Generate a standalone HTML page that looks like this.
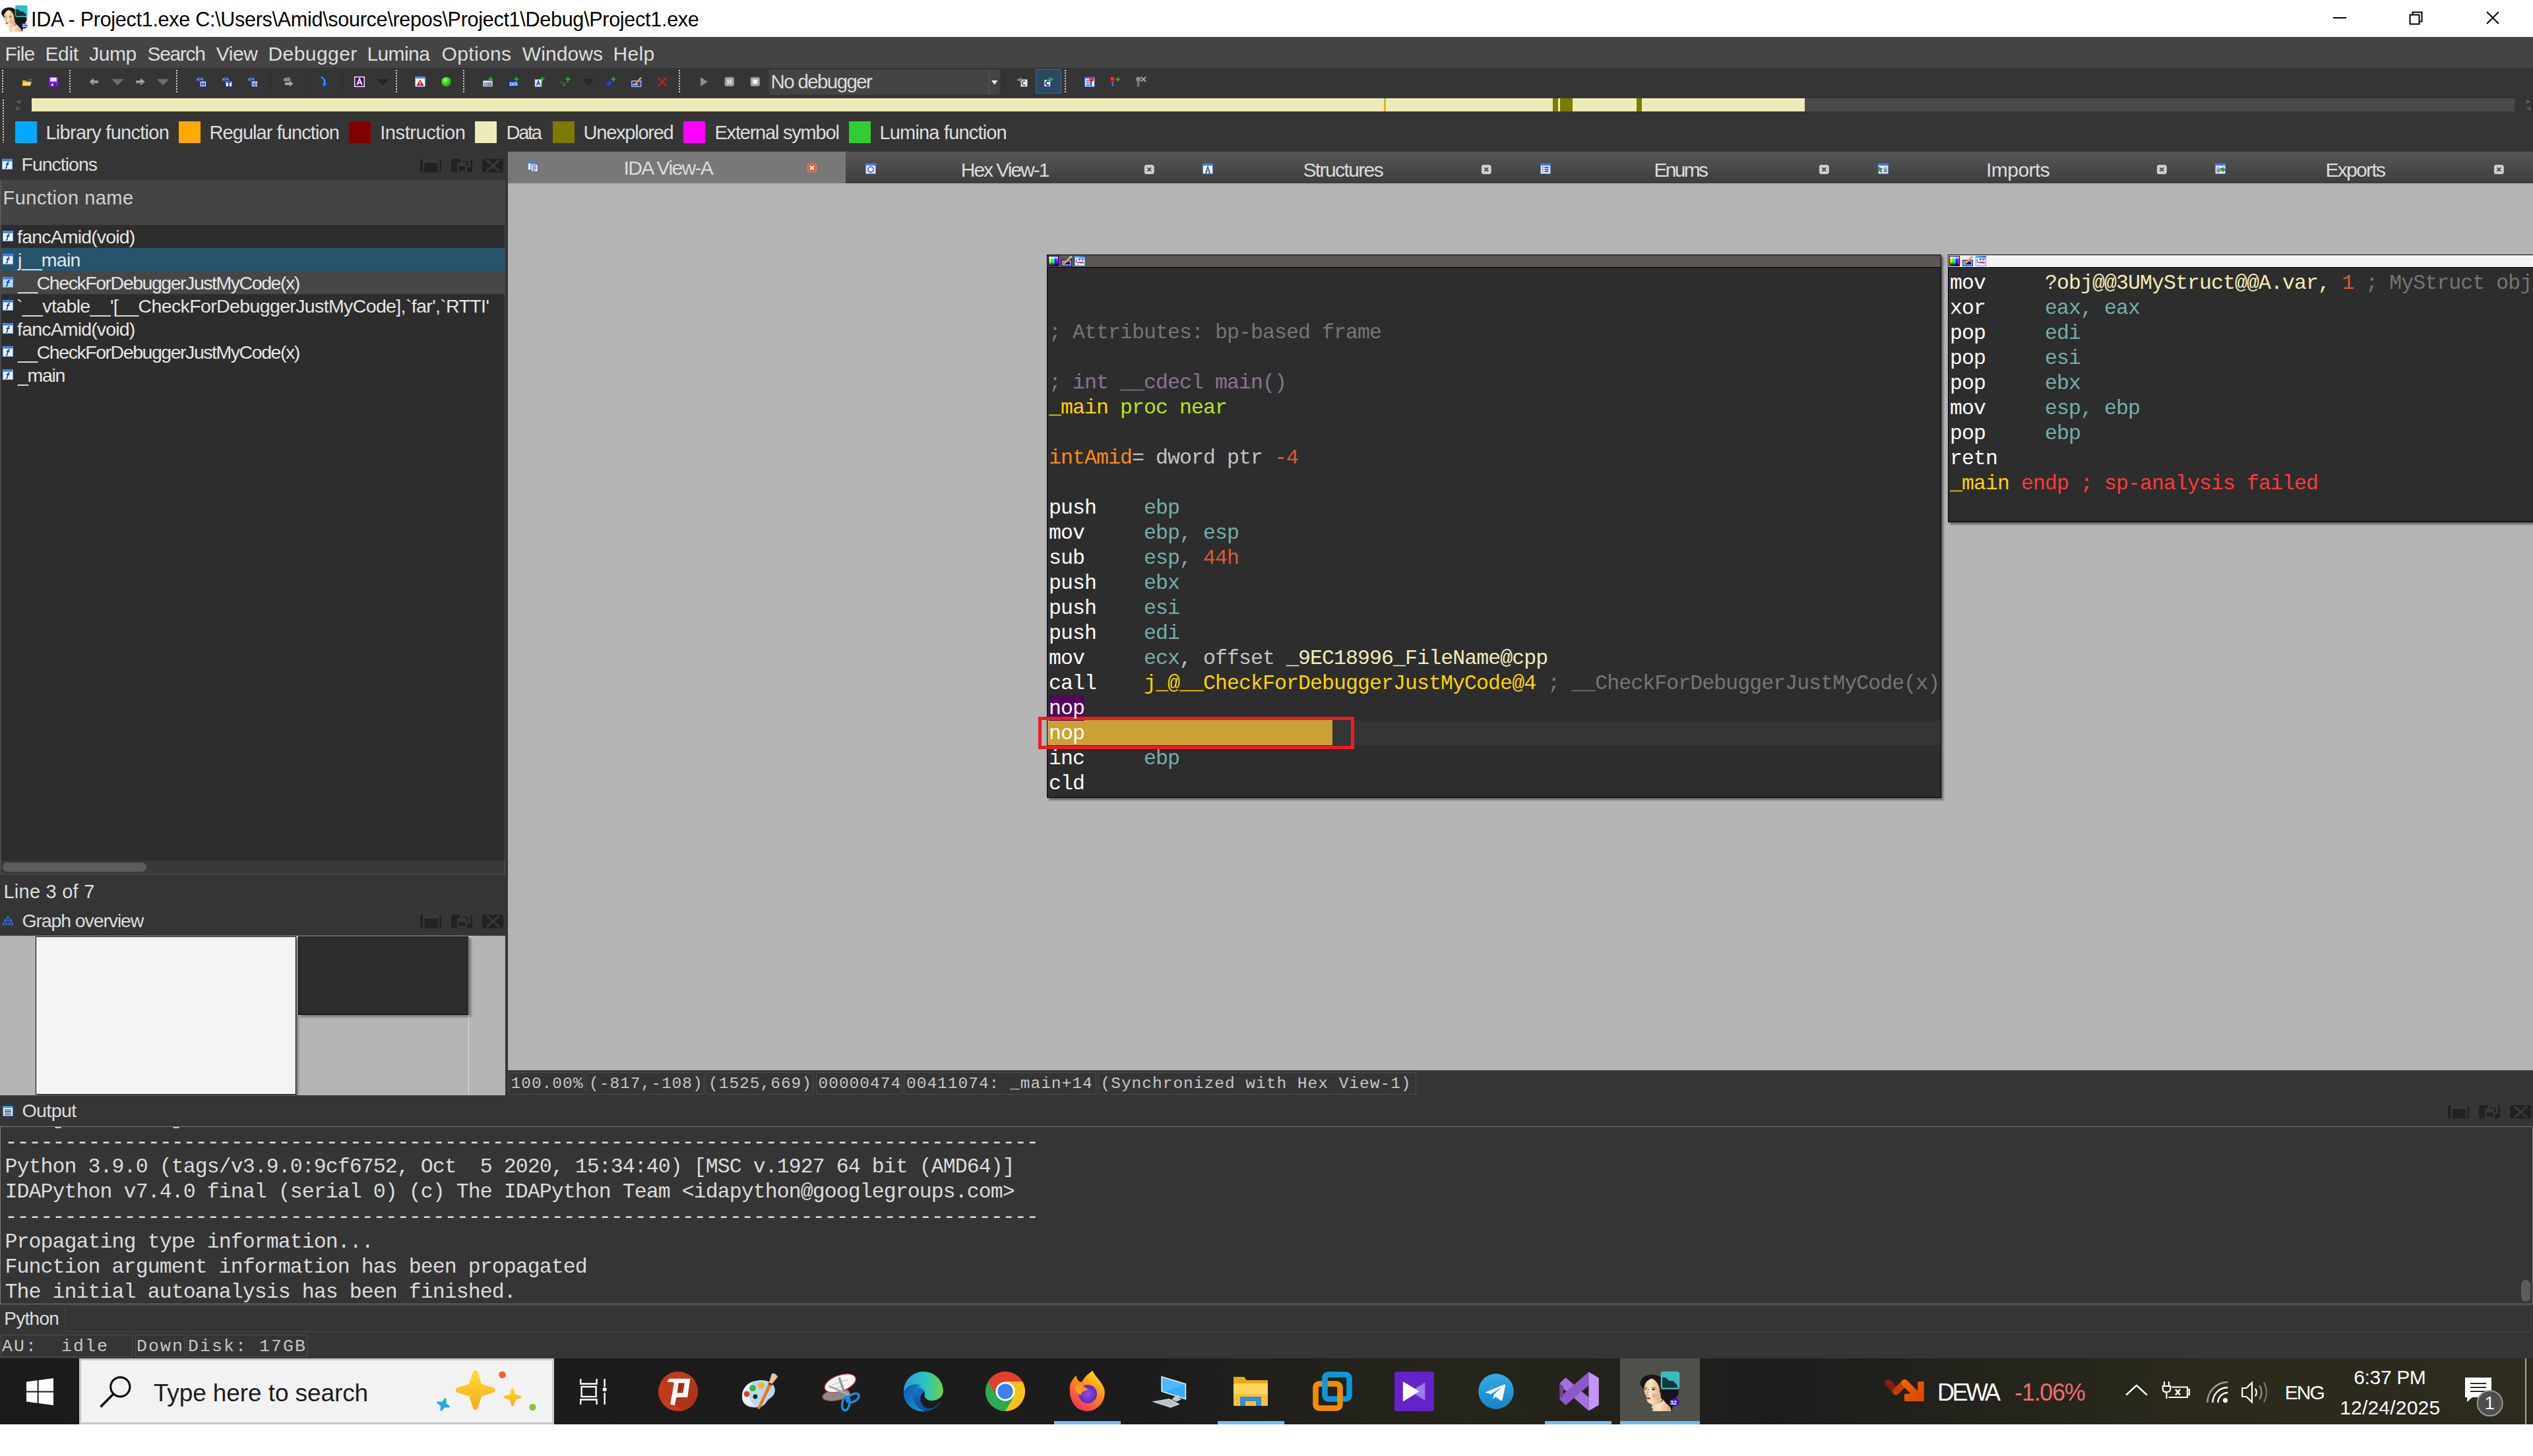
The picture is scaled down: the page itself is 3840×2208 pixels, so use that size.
<!DOCTYPE html><html><head><meta charset="utf-8"><title>IDA</title><style>html,body{margin:0;padding:0;background:#fff}
html{overflow:hidden}
body{width:3840px;height:2208px;position:relative;overflow:hidden;font-family:"Liberation Sans",sans-serif}
div,span.t,svg{position:absolute}
span.t{white-space:pre}
span.c{font:31.5px/38px "Liberation Mono",monospace;letter-spacing:-0.9px}
svg{overflow:visible}
</style></head><body>
<div style="left:0px;top:0px;width:3840px;height:56px;background:#ffffff;"></div>
<svg style="left:0px;top:0px;" width="46" height="56" viewBox="0 0 46 56"><g transform="translate(-18.4,-5.3) scale(.667)"><defs><linearGradient id="sk" x1="0" y1="0" x2="1" y2="0"><stop offset="0" stop-color="#e4c094"/><stop offset=".35" stop-color="#f8e6c4"/><stop offset="1" stop-color="#d8a878"/></linearGradient></defs>
<path d="M31 40Q29.5 31 39 26.5Q49 23 58 26.5Q66 30 70 40L88 47Q90.5 56 84 60Q87 68 80.5 72L78.5 79.5L58 79.5L44 60Z" fill="#17141a"/>
<path d="M50 68L63 58Q67 66 72 70Q77.5 74 77.6 80L49 80Q50 74 47.5 70Z" fill="url(#sk)"/>
<path d="M36.2 45Q37.5 35 46 31.2Q52.5 29.5 56 36Q60 42 60.5 50Q62.5 55 62 60L63.5 65Q59 70 52 69Q46 70 42 66Q39.5 62.5 40.5 58.5Q36 52 36.2 45Z" fill="url(#sk)"/>
<path d="M47 30Q55 27 60 34Q65 42 64 52Q66 58 65 64L61.5 66Q63 58 60.2 50Q60 41 54.5 35Q51 31 47 30Z" fill="#2a1a14"/>
<path d="M43.4 45L41 55.5L44 56" stroke="#c09068" stroke-width="1" fill="none"/>
<ellipse cx="52" cy="56.5" rx="4.2" ry="3.4" fill="#e89888" opacity=".55"/>
<ellipse cx="38.6" cy="46.4" rx="1.7" ry=".9" fill="#4a382c"/><ellipse cx="50.6" cy="47" rx="2.3" ry="1.2" fill="#32241c"/>
<path d="M36.8 44.6Q39 43.4 41 44.4M47.4 44.6Q51 43 54.6 45" stroke="#6a4a38" stroke-width=".8" fill="none"/>
<ellipse cx="43.2" cy="60.6" rx="3" ry="1.5" fill="#b4452c"/>
<ellipse cx="62.2" cy="62.6" rx="1.1" ry="2.2" fill="#f4f0ec"/>
<path d="M47.5 74.6Q58 74 66.5 66.5" stroke="#f0e8e0" stroke-width="1.5" stroke-dasharray="1.3 .9" fill="none"/>
<rect x="62.4" y="20.5" width="27" height="25.6" rx="3" fill="#35bcc0" stroke="#40cccc" stroke-width="1.2"/>
<path d="M64 29Q69 27.6 72.4 32Q74 35 76.4 34Q80.6 33 83 37Q86.4 38.4 87 42L87 44.4L64 44.4Z" fill="#14363a"/>
<circle cx="83.4" cy="66.5" r="6.3" fill="#3a14c8"/></g></svg>
<span class="t" style='left:33.4px;top:35.15px;font:6.5px/8px "Liberation Sans", sans-serif;color:#fff;font-weight:bold;'>32</span>
<span class="t" style='left:47.05px;top:9.23px;font:30.5px/40px "Liberation Sans", sans-serif;color:#000;letter-spacing:-0.273px;'>IDA - Project1.exe C:\Users\Amid\source\repos\Project1\Debug\Project1.exe</span>
<svg style="left:3530px;top:10px;" width="280" height="36" viewBox="0 0 280 36">
<path d="M7 17H27" stroke="#000" stroke-width="2" fill="none"/>
<path d="M123.5 12.5h14v14h-14z M127.5 12.5v-4h14v14h-4" stroke="#000" stroke-width="2" fill="none"/>
<path d="M240 8L258 26M258 8L240 26" stroke="#000" stroke-width="2" fill="none"/>
</svg>
<div style="left:0px;top:56px;width:3840px;height:47px;background:#444444;"></div>
<span class="t" style='left:7.4px;top:62.10px;font:30px/39px "Liberation Sans", sans-serif;color:#dedede;letter-spacing:-0.833px;'>File</span>
<span class="t" style='left:68.4px;top:62.10px;font:30px/39px "Liberation Sans", sans-serif;color:#dedede;letter-spacing:-0.333px;'>Edit</span>
<span class="t" style='left:135.35px;top:62.10px;font:30px/39px "Liberation Sans", sans-serif;color:#dedede;letter-spacing:-0.5px;'>Jump</span>
<span class="t" style='left:223.45px;top:62.10px;font:30px/39px "Liberation Sans", sans-serif;color:#dedede;letter-spacing:-1.32px;'>Search</span>
<span class="t" style='left:327.8px;top:62.10px;font:30px/39px "Liberation Sans", sans-serif;color:#dedede;letter-spacing:-0.433px;'>View</span>
<span class="t" style='left:406.4px;top:62.10px;font:30px/39px "Liberation Sans", sans-serif;color:#dedede;letter-spacing:0.457px;'>Debugger</span>
<span class="t" style='left:556.4px;top:62.10px;font:30px/39px "Liberation Sans", sans-serif;color:#dedede;letter-spacing:-0.59px;'>Lumina</span>
<span class="t" style='left:669.45px;top:62.10px;font:30px/39px "Liberation Sans", sans-serif;color:#dedede;letter-spacing:0.375px;'>Options</span>
<span class="t" style='left:791.8px;top:62.10px;font:30px/39px "Liberation Sans", sans-serif;color:#dedede;letter-spacing:0.1px;'>Windows</span>
<span class="t" style='left:929.4px;top:62.10px;font:30px/39px "Liberation Sans", sans-serif;color:#dedede;letter-spacing:0.383px;'>Help</span>
<div style="left:0px;top:103px;width:3840px;height:127px;background:#353535;"></div>
<div style="left:3px;top:106px;width:2px;height:35px;background-image:repeating-linear-gradient(#d8d8d8 0 2px,transparent 2px 4px);"></div>
<div style="left:105px;top:106px;width:2px;height:35px;background-image:repeating-linear-gradient(#d8d8d8 0 2px,transparent 2px 4px);"></div>
<div style="left:267px;top:106px;width:2px;height:35px;background-image:repeating-linear-gradient(#d8d8d8 0 2px,transparent 2px 4px);"></div>
<div style="left:600px;top:106px;width:2px;height:35px;background-image:repeating-linear-gradient(#d8d8d8 0 2px,transparent 2px 4px);"></div>
<div style="left:702px;top:106px;width:2px;height:35px;background-image:repeating-linear-gradient(#d8d8d8 0 2px,transparent 2px 4px);"></div>
<div style="left:1029px;top:106px;width:2px;height:35px;background-image:repeating-linear-gradient(#d8d8d8 0 2px,transparent 2px 4px);"></div>
<div style="left:1614px;top:106px;width:2px;height:35px;background-image:repeating-linear-gradient(#d8d8d8 0 2px,transparent 2px 4px);"></div>
<div style="left:4px;top:151px;width:2px;height:65px;background-image:repeating-linear-gradient(#d8d8d8 0 2px,transparent 2px 4px);"></div>
<div style="left:410px;top:108px;width:1px;height:32px;background:#2b2b2b;"></div>
<div style="left:464px;top:108px;width:1px;height:32px;background:#2b2b2b;"></div>
<div style="left:518px;top:108px;width:1px;height:32px;background:#2b2b2b;"></div>
<div style="left:1523px;top:108px;width:1px;height:32px;background:#2b2b2b;"></div>
<svg style="left:33px;top:116px;" width="16" height="16" viewBox="0 0 16 16"><path d="M1 6h5l1 1.5h6V14H1z" fill="#e8b818"/><path d="M0.5 14L3 8.5h12L12.5 14z" fill="#ffe066" stroke="#c89a10" stroke-width=".6"/><path d="M9 4.5h3.5V2.5L15.5 5L12.5 7.5V5.8H9z" fill="#2c6be0"/></svg>
<svg style="left:73px;top:116px;" width="16" height="16" viewBox="0 0 16 16"><rect x=".8" y=".8" width="14.4" height="14.4" rx="1.2" fill="#7a28d8" stroke="#5a16b0" stroke-width=".8"/><rect x="3.2" y="1.6" width="9.6" height="6" fill="#efe4f4"/><rect x="4" y="10" width="8" height="5" fill="#5a16b0"/><rect x="5" y="11" width="2.6" height="3.2" fill="#fff"/></svg>
<svg style="left:135px;top:117px;" width="15" height="14" viewBox="0 0 15 14"><path d="M0 7L7 1.5V5h7v4.5H7v3.5z" fill="#8a8a8a"/><path d="M1.5 7L6.5 3v3h6.5v1H1.5z" fill="#b4b4b4"/></svg>
<svg style="left:205px;top:117px;" width="15" height="14" viewBox="0 0 15 14"><g transform="translate(15,0) scale(-1,1)"><path d="M0 7L7 1.5V5h7v4.5H7v3.5z" fill="#8a8a8a"/><path d="M1.5 7L6.5 3v3h6.5v1H1.5z" fill="#b4b4b4"/></g></svg>
<svg style="left:168.5px;top:120px;" width="19" height="10" viewBox="0 0 19 10"><path d="M0 0h18.5L9.2 9.5z" fill="#6c6c6c"/></svg>
<svg style="left:237.5px;top:120px;" width="19" height="10" viewBox="0 0 19 10"><path d="M0 0h18.5L9.2 9.5z" fill="#6c6c6c"/></svg>
<svg style="left:297px;top:116px;" width="16" height="16" viewBox="0 0 16 16"><path d="M1 2.5h3v-1.5h2v1.5h1.5v-1.5h2v1.5h1.5V7H8.5V5h-2v2H1z" fill="#3a64c8"/><path d="M2 3.5h2v1H2zM7.8 3.5h2v1h-2z" fill="#bcd0ff"/><rect x="6.2" y="7.2" width="9.3" height="8.3" fill="#fff" stroke="#1b3fa8" stroke-width="1"/><path d="M9 8.5v6M12.5 8.5v6M7.5 10.3h7M7.5 12.8h7" stroke="#10287a" stroke-width="1.1"/></svg>
<svg style="left:336px;top:116px;" width="16" height="16" viewBox="0 0 16 16"><path d="M1 2.5h3v-1.5h2v1.5h1.5v-1.5h2v1.5h1.5V7H8.5V5h-2v2H1z" fill="#3a64c8"/><path d="M2 3.5h2v1H2zM7.8 3.5h2v1h-2z" fill="#bcd0ff"/><rect x="6.2" y="7.2" width="9.3" height="8.3" fill="#fff" stroke="#1b3fa8" stroke-width="1"/><path d="M8 9h6M11 9v5.5M9.8 14.3h2.4" stroke="#10287a" stroke-width="1.5"/></svg>
<svg style="left:375px;top:116px;" width="16" height="16" viewBox="0 0 16 16"><path d="M1 2.5h3v-1.5h2v1.5h1.5v-1.5h2v1.5h1.5V7H8.5V5h-2v2H1z" fill="#3a64c8"/><path d="M2 3.5h2v1H2zM7.8 3.5h2v1h-2z" fill="#bcd0ff"/><rect x="6.2" y="7.2" width="9.3" height="8.3" fill="#fff" stroke="#1b3fa8" stroke-width="1"/><path d="M8 9.5v4.5M10 9.5h2v4.5h-2zM14 9.5v4.5" stroke="#10287a" stroke-width="1" fill="none"/></svg>
<svg style="left:429px;top:116px;" width="16" height="16" viewBox="0 0 16 16"><path d="M1 2.5h3v-1.5h2v1.5h1.5v-1.5h2v1.5h1.5V7H1z" fill="#8a8a8a"/><path d="M3 9h7V6.2L15.5 11L10 15.6V13H3z" fill="#a8a8a8" stroke="#6e6e6e" stroke-width=".7"/></svg>
<svg style="left:483px;top:116px;" width="16" height="16" viewBox="0 0 16 16"><path d="M2 .5C9 1 11.5 5 10.5 10.5h3.2L8.5 16L4.2 10.5h3C8 6 6 2.5 2 .5z" fill="#1e7af0" stroke="#0c3cb0" stroke-width=".7"/><path d="M3.5 1.2C8 2.2 10 5.5 9.2 10" stroke="#7fd0ff" stroke-width="1" fill="none"/></svg>
<svg style="left:537px;top:116px;" width="16" height="16" viewBox="0 0 16 16"><rect x=".7" y=".7" width="14.6" height="14.6" fill="#4a0a6e" stroke="#f2f2f2" stroke-width="1.4"/><path d="M4.2 12.8L8 3.2L11.8 12.8M5.6 9.6h4.8" stroke="#fff" stroke-width="1.7" fill="none"/></svg>
<svg style="left:570.5px;top:120px;" width="19" height="10" viewBox="0 0 19 10"><path d="M0 0h18.5L9.2 9.5z" fill="#262626"/></svg>
<svg style="left:629px;top:116px;" width="16" height="16" viewBox="0 0 16 16"><rect x=".6" y=".6" width="14.8" height="14.6" fill="#fff" stroke="#5a9ae8" stroke-width="1"/><rect x=".6" y=".6" width="14.8" height="2.6" fill="#4a8ee8"/><path d="M8 4.6L13.6 14H2.4z" fill="#e01818"/><path d="M8 7.6v3.4M8 12v1.2" stroke="#fff" stroke-width="1.4"/></svg>
<svg style="left:669px;top:116px;" width="16" height="16" viewBox="0 0 16 16"><defs><radialGradient id="gg" cx=".4" cy=".35" r=".7"><stop offset="0" stop-color="#a8ff7a"/><stop offset=".5" stop-color="#35d820"/><stop offset="1" stop-color="#1a9a10"/></radialGradient></defs><circle cx="7.5" cy="8" r="7.3" fill="url(#gg)"/></svg>
<svg style="left:732px;top:116px;" width="16" height="16" viewBox="0 0 16 16"><rect x=".5" y="6.5" width="14" height="8.5" fill="#e8eef4" stroke="#9ab" stroke-width=".8"/><text x="7.5" y="13.6" font-family="Liberation Sans" font-weight="bold" font-size="6.6" text-anchor="middle" fill="#0c2468" textLength="12" lengthAdjust="spacingAndGlyphs">CODE</text><path d="M8.3 4h7M11.8 0.5v7" stroke="#22c722" stroke-width="1.7"/></svg>
<svg style="left:771px;top:116px;" width="16" height="16" viewBox="0 0 16 16"><rect x=".5" y="6.5" width="14" height="8.5" fill="#1c48d0" stroke="#0a2a90" stroke-width=".8"/><text x="7.5" y="13.6" font-family="Liberation Sans" font-weight="bold" font-size="6.6" text-anchor="middle" fill="#fff" textLength="12" lengthAdjust="spacingAndGlyphs">DATA</text><path d="M8.3 4h7M11.8 0.5v7" stroke="#22c722" stroke-width="1.7"/></svg>
<svg style="left:810px;top:116px;" width="16" height="16" viewBox="0 0 16 16"><rect x="1" y="4.6" width="10" height="10.8" fill="#e6eef8" stroke="#7a9ac8" stroke-width=".8"/><path d="M3.4 13.6L6 6.4L8.6 13.6M4.4 11h3.2" stroke="#1a3a98" stroke-width="1.3" fill="none"/><path d="M8.5 4h7M12 0.5v7" stroke="#22c722" stroke-width="1.7"/></svg>
<svg style="left:849px;top:116px;" width="16" height="16" viewBox="0 0 16 16"><text x="0" y="15" font-family="Liberation Serif" font-weight="bold" font-size="12" fill="#2e8a1c">‘s’</text><path d="M8.5 4h7M12 0.5v7" stroke="#22c722" stroke-width="1.7"/></svg>
<svg style="left:882.5px;top:120px;" width="19" height="10" viewBox="0 0 19 10"><path d="M0 0h18.5L9.2 9.5z" fill="#262626"/></svg>
<svg style="left:918px;top:116px;" width="16" height="16" viewBox="0 0 16 16"><path d="M5.5 5.5v10M1.2 8l8.6 5M9.8 8L1.2 13" stroke="#2340e8" stroke-width="1.7"/><path d="M8.5 4h7M12 0.5v7" stroke="#22c722" stroke-width="1.7"/></svg>
<svg style="left:957px;top:116px;" width="16" height="16" viewBox="0 0 16 16"><rect x=".8" y="6.8" width="14" height="8.4" fill="#1c3ed0" stroke="#e8eefc" stroke-width="1"/><rect x="2.6" y="11.4" width="7" height="1.8" fill="#fff"/><path d="M5.2 10.8L13.4 1.6L15.2 3.2L7 12.2L4.6 12.8z" fill="#f0a020" stroke="#a86a10" stroke-width=".5"/><path d="M13.4 1.6L15.2 3.2L15.8 1z" fill="#9ad0ff"/></svg>
<svg style="left:996px;top:116px;" width="16" height="16" viewBox="0 0 16 16"><path d="M1.2 1.2L14.8 14.8M14.8 1.2L1.2 14.8" stroke="#e81414" stroke-width="1.9"/></svg>
<svg style="left:1061px;top:116px;" width="16" height="16" viewBox="0 0 16 16"><path d="M1 1.2L12 8L1 14.8z" fill="#8e8e8e"/></svg>
<svg style="left:1098px;top:116px;" width="16" height="16" viewBox="0 0 16 16"><rect x=".5" y=".8" width="14.5" height="14.2" rx="3" fill="#8e8e8e"/><rect x="1.8" y="2" width="12" height="11.8" rx="2.2" fill="#a8a8a8"/><path d="M5.8 4.6v6.6M9.6 4.6v6.6" stroke="#f2f2f2" stroke-width="1.9"/></svg>
<svg style="left:1137px;top:116px;" width="16" height="16" viewBox="0 0 16 16"><rect x=".5" y=".8" width="14.5" height="14.2" rx="3" fill="#8e8e8e"/><rect x="1.8" y="2" width="12" height="11.8" rx="2.2" fill="#a8a8a8"/><rect x="4.4" y="4.6" width="6.8" height="6.6" fill="#f6f6f6"/></svg>
<div style="left:1165px;top:105px;width:351px;height:39px;background:#444444;border-radius:4px;box-shadow:inset 0 0 0 1px #3e3e3e;"></div>
<div style="left:1499px;top:106px;width:1px;height:37px;background:#5a5a5a;"></div>
<svg style="left:1503px;top:122px;" width="10" height="7" viewBox="0 0 10 7"><path d="M0 0h9.4L4.7 6.4z" fill="#f4f4f4"/></svg>
<span class="t" style='left:1168.44px;top:105.28px;font:29.5px/38px "Liberation Sans", sans-serif;color:#dcdcdc;letter-spacing:-1.616px;'>No debugger</span>
<svg style="left:1542px;top:116px;" width="16" height="16" viewBox="0 0 16 16"><rect x="5.6" y="4.6" width="9.8" height="10.6" fill="#f0f0f0" stroke="#8a8a8a" stroke-width=".8"/><path d="M12.6 7.6A3 3 0 1 0 12.6 12.4" stroke="#555" stroke-width="1.7" fill="none"/><path d="M0 3.4h4.4V1l4.8 4l-4.8 4V6.6H0z" fill="#8a8a8a"/></svg>
<div style="left:1570px;top:105px;width:39px;height:37px;background:#2b4961;box-shadow:inset 0 0 0 1px #2f6ea6;"></div>
<svg style="left:1582px;top:116px;" width="16" height="16" viewBox="0 0 16 16"><rect x=".8" y="4.8" width="10" height="10.6" fill="#f4f6ff" stroke="#20349a" stroke-width="1"/><path d="M8.4 7.8A3 3 0 1 0 8.4 12.4" stroke="#14207a" stroke-width="1.8" fill="none"/><path d="M8.4 .4L15.6 4.6L8.4 8.8z" fill="#1cb43a"/></svg>
<svg style="left:1644px;top:116px;" width="16" height="16" viewBox="0 0 16 16"><rect x=".6" y="1" width="14.6" height="14.4" fill="#f4f6ff" stroke="#3a6ae0" stroke-width="1"/><rect x=".6" y="1" width="14.6" height="2.4" fill="#3a7ae8"/><path d="M2.6 6h5M2.6 8.5h5M2.6 11h5M2.6 13.4h5" stroke="#1c3ca8" stroke-width="1.1"/><rect x="8.6" y="6.2" width="2.6" height="8" fill="#444a68"/><circle cx="10.6" cy="4.6" r="3.2" fill="#e81818"/><circle cx="9.8" cy="3.8" r="1" fill="#ff9a9a"/></svg>
<svg style="left:1683px;top:116px;" width="16" height="16" viewBox="0 0 16 16"><rect x="1.6" y="6" width="4" height="9.4" fill="#2a3a8a"/><circle cx="3.6" cy="4" r="3.5" fill="#e81818"/><circle cx="2.8" cy="3" r="1" fill="#ff9a9a"/><circle cx="3.6" cy="9.6" r="1" fill="#8ab0ff"/><circle cx="3.6" cy="13" r="1" fill="#8ab0ff"/><path d="M8.3 4.4h7M11.8 0.9000000000000004v7" stroke="#22c722" stroke-width="1.7"/></svg>
<svg style="left:1722px;top:116px;" width="16" height="16" viewBox="0 0 16 16"><rect x="1.6" y="6" width="4" height="9.4" fill="#6e6e6e"/><circle cx="3.6" cy="4" r="3.5" fill="#8e8e8e"/><path d="M7.6 .8l7.6 7M15.2 .8l-7.6 7" stroke="#a0a0a0" stroke-width="2"/></svg>
<div style="left:48px;top:149px;width:2688px;height:20px;background:#ecebb9;"></div>
<div style="left:2736px;top:149px;width:1076px;height:20px;background:#4a4a4a;"></div>
<div style="left:2098px;top:149px;width:3px;height:20px;background:#ffaa00;"></div>
<div style="left:2098px;top:149px;width:3px;height:6px;background:#7ee03a;"></div>
<div style="left:2354px;top:149px;width:8px;height:20px;background:#7b7b00;"></div>
<div style="left:2365px;top:149px;width:19px;height:20px;background:#7b7b00;"></div>
<div style="left:2481px;top:149px;width:8px;height:20px;background:#7b7b00;"></div>
<svg style="left:24px;top:150px;" width="8" height="19" viewBox="0 0 8 19"><path d="M7 .5v7.4L.4 4.2zM.6 10.6v7.6L7.2 14.4z" fill="#585858"/></svg>
<svg style="left:3829px;top:150px;" width="8" height="19" viewBox="0 0 8 19"><path d="M.6 .5v7.4L7.2 4.2zM7 10.6v7.6L.4 14.4z" fill="#585858"/></svg>
<div style="left:23px;top:184px;width:33px;height:33px;background:#00aaff;"></div>
<span class="t" style='left:69.48px;top:181.75px;font:29px/38px "Liberation Sans", sans-serif;color:#dedede;letter-spacing:-0.73px;'>Library function</span>
<div style="left:270.6px;top:184px;width:33px;height:33px;background:#ffaa00;"></div>
<span class="t" style='left:317.48px;top:181.75px;font:29px/38px "Liberation Sans", sans-serif;color:#dedede;letter-spacing:-0.924px;'>Regular function</span>
<div style="left:529px;top:184px;width:33px;height:33px;background:#800000;"></div>
<span class="t" style='left:576.19px;top:181.75px;font:29px/38px "Liberation Sans", sans-serif;color:#dedede;letter-spacing:-0.414px;'>Instruction</span>
<div style="left:720px;top:184px;width:33px;height:33px;background:#ecebb9;"></div>
<span class="t" style='left:767.48px;top:181.75px;font:29px/38px "Liberation Sans", sans-serif;color:#dedede;letter-spacing:-2.272px;'>Data</span>
<div style="left:838px;top:184px;width:33px;height:33px;background:#7b7b00;"></div>
<span class="t" style='left:884.62px;top:181.75px;font:29px/38px "Liberation Sans", sans-serif;color:#dedede;letter-spacing:-1.247px;'>Unexplored</span>
<div style="left:1036px;top:184px;width:33px;height:33px;background:#ff00ff;"></div>
<span class="t" style='left:1083.48px;top:181.75px;font:29px/38px "Liberation Sans", sans-serif;color:#dedede;letter-spacing:-1.209px;'>External symbol</span>
<div style="left:1287px;top:184px;width:33px;height:33px;background:#32cd32;"></div>
<span class="t" style='left:1333.48px;top:181.75px;font:29px/38px "Liberation Sans", sans-serif;color:#dedede;letter-spacing:-0.82px;'>Lumina function</span>
<div style="left:0px;top:230px;width:770px;height:1431px;background:#353535;"></div>
<svg style="left:3px;top:241px;" width="16" height="16" viewBox="0 0 16 16"><rect x=".5" y=".5" width="15" height="15" fill="#e6f2ff" stroke="#7ab4f0" stroke-width="1"/><rect x=".5" y=".5" width="15" height="3" fill="#2e7ae0"/><path d="M10.8 5.2Q8.6 4.6 8.2 7L7 12.6Q6.6 14.4 4.8 13.8M5.6 8.2h5" stroke="#0c1c6a" stroke-width="1.3" fill="none"/></svg>
<span class="t" style='left:32.52px;top:231.22px;font:28.5px/37px "Liberation Sans", sans-serif;color:#dedede;letter-spacing:-1.009px;'>Functions</span>
<svg style="left:637px;top:241px;" width="128" height="21" viewBox="0 0 128 21"><g fill="#222"><rect x="0" y="0" width="32" height="20.4" rx="3.5"/><rect x="47" y="0" width="32" height="20.4" rx="3.5"/><rect x="94" y="0" width="32" height="20.4" rx="3.5"/></g>
<g fill="#353739"><path d="M4.1 0h25.2v20.4h-2.4V6H6.4v14.4H4.1z"/>
<path d="M61 0h15v12.7h-5V20.4H56V5h5zM64 3.3v1.7h6.5v5.2H73V3.3zM58.4 11v6.7h10V11z" fill-rule="evenodd"/></g>
<path d="M100.7 1.6L120 19M120 1.6L100.7 19" stroke="#353739" stroke-width="3.4"/></svg>
<div style="left:0px;top:273px;width:766px;height:68px;background:#444444;box-shadow:inset 2px 0 0 #555;"></div>
<span class="t" style='left:4.48px;top:280.95px;font:29px/38px "Liberation Sans", sans-serif;color:#d2d2d2;letter-spacing:0.487px;'>Function name</span>
<div style="left:2px;top:341px;width:763px;height:964px;background:#2d2d2d;"></div>
<div style="left:765px;top:341px;width:1px;height:985px;background:#484848;"></div>
<div style="left:2px;top:376px;width:763px;height:35px;background:#28536c;"></div>
<div style="left:2px;top:411px;width:763px;height:35px;background:#464646;"></div>
<svg style="left:4px;top:350px;" width="16" height="16" viewBox="0 0 16 16"><rect x=".5" y=".5" width="15" height="15" fill="#e6f2ff" stroke="#7ab4f0" stroke-width="1"/><rect x=".5" y=".5" width="15" height="3" fill="#2e7ae0"/><path d="M10.8 5.2Q8.6 4.6 8.2 7L7 12.6Q6.6 14.4 4.8 13.8M5.6 8.2h5" stroke="#0c1c6a" stroke-width="1.3" fill="none"/></svg>
<span class="t" style='left:26.12px;top:340.62px;font:28.5px/37px "Liberation Sans", sans-serif;color:#e6e6e6;letter-spacing:-0.838px;'>fancAmid(void)</span>
<svg style="left:4px;top:385px;" width="16" height="16" viewBox="0 0 16 16"><rect x=".5" y=".5" width="15" height="15" fill="#e6f2ff" stroke="#7ab4f0" stroke-width="1"/><rect x=".5" y=".5" width="15" height="3" fill="#2e7ae0"/><path d="M10.8 5.2Q8.6 4.6 8.2 7L7 12.6Q6.6 14.4 4.8 13.8M5.6 8.2h5" stroke="#0c1c6a" stroke-width="1.3" fill="none"/></svg>
<span class="t" style='left:27.11px;top:375.62px;font:28.5px/37px "Liberation Sans", sans-serif;color:#e6e6e6;letter-spacing:-0.759px;'>j__main</span>
<svg style="left:4px;top:420px;" width="16" height="16" viewBox="0 0 16 16"><rect x=".5" y=".5" width="15" height="15" fill="#b4d6f8" stroke="#7ab4f0" stroke-width="1"/><rect x=".5" y=".5" width="15" height="3" fill="#2e7ae0"/><path d="M10.8 5.2Q8.6 4.6 8.2 7L7 12.6Q6.6 14.4 4.8 13.8M5.6 8.2h5" stroke="#0c1c6a" stroke-width="1.3" fill="none"/></svg>
<span class="t" style='left:26.97px;top:410.62px;font:28.5px/37px "Liberation Sans", sans-serif;color:#e6e6e6;letter-spacing:-1.459px;'>__CheckForDebuggerJustMyCode(x)</span>
<svg style="left:4px;top:455px;" width="16" height="16" viewBox="0 0 16 16"><rect x=".5" y=".5" width="15" height="15" fill="#e6f2ff" stroke="#7ab4f0" stroke-width="1"/><rect x=".5" y=".5" width="15" height="3" fill="#2e7ae0"/><path d="M10.8 5.2Q8.6 4.6 8.2 7L7 12.6Q6.6 14.4 4.8 13.8M5.6 8.2h5" stroke="#0c1c6a" stroke-width="1.3" fill="none"/></svg>
<span class="t" style='left:24.98px;top:445.62px;font:28.5px/37px "Liberation Sans", sans-serif;color:#e6e6e6;letter-spacing:-0.628px;'>`__vtable__'[__CheckForDebuggerJustMyCode],`far',`RTTI'</span>
<svg style="left:4px;top:490px;" width="16" height="16" viewBox="0 0 16 16"><rect x=".5" y=".5" width="15" height="15" fill="#e6f2ff" stroke="#7ab4f0" stroke-width="1"/><rect x=".5" y=".5" width="15" height="3" fill="#2e7ae0"/><path d="M10.8 5.2Q8.6 4.6 8.2 7L7 12.6Q6.6 14.4 4.8 13.8M5.6 8.2h5" stroke="#0c1c6a" stroke-width="1.3" fill="none"/></svg>
<span class="t" style='left:26.12px;top:480.62px;font:28.5px/37px "Liberation Sans", sans-serif;color:#e6e6e6;letter-spacing:-0.838px;'>fancAmid(void)</span>
<svg style="left:4px;top:525px;" width="16" height="16" viewBox="0 0 16 16"><rect x=".5" y=".5" width="15" height="15" fill="#e6f2ff" stroke="#7ab4f0" stroke-width="1"/><rect x=".5" y=".5" width="15" height="3" fill="#2e7ae0"/><path d="M10.8 5.2Q8.6 4.6 8.2 7L7 12.6Q6.6 14.4 4.8 13.8M5.6 8.2h5" stroke="#0c1c6a" stroke-width="1.3" fill="none"/></svg>
<span class="t" style='left:26.97px;top:515.62px;font:28.5px/37px "Liberation Sans", sans-serif;color:#e6e6e6;letter-spacing:-1.459px;'>__CheckForDebuggerJustMyCode(x)</span>
<svg style="left:4px;top:560px;" width="16" height="16" viewBox="0 0 16 16"><rect x=".5" y=".5" width="15" height="15" fill="#e6f2ff" stroke="#7ab4f0" stroke-width="1"/><rect x=".5" y=".5" width="15" height="3" fill="#2e7ae0"/><path d="M10.8 5.2Q8.6 4.6 8.2 7L7 12.6Q6.6 14.4 4.8 13.8M5.6 8.2h5" stroke="#0c1c6a" stroke-width="1.3" fill="none"/></svg>
<span class="t" style='left:26.97px;top:550.62px;font:28.5px/37px "Liberation Sans", sans-serif;color:#e6e6e6;letter-spacing:-1.331px;'>_main</span>
<div style="left:2px;top:1305px;width:763px;height:21px;background:#393939;box-shadow:inset 0 -1px 0 #4a4a4a, inset -1px 0 0 #4a4a4a;"></div>
<div style="left:4px;top:1308px;width:218px;height:14px;background:#5c5c5c;border-radius:7px;"></div>
<div style="left:0px;top:341px;width:2px;height:985px;background:#4a4a4a;"></div>
<span class="t" style='left:5.48px;top:1332.65px;font:29px/38px "Liberation Sans", sans-serif;color:#dedede;letter-spacing:0.239px;'>Line 3 of 7</span>
<svg style="left:4px;top:1388px;" width="16" height="16" viewBox="0 0 16 16"><g fill="#2a6ae8"><rect x="6.5" y="1" width="3" height="3"/><rect x="2" y="6.5" width="3" height="3"/><rect x="6.5" y="6.5" width="3" height="3"/><rect x="11" y="6.5" width="3" height="3"/><rect x="0" y="12" width="3" height="3"/><rect x="4.3" y="12" width="3" height="3"/><rect x="8.6" y="12" width="3" height="3"/><rect x="13" y="12" width="3" height="3"/></g><path d="M8 4v2.5M3.5 6.5V5.4h9v1.1M1.5 12v-1.2h4v1.2M3.5 9.5v1.3M10 12v-1.2h4.5v1.2M12.5 9.5v1.3" stroke="#2a6ae8" stroke-width=".8" fill="none"/></svg>
<span class="t" style='left:33.38px;top:1377.62px;font:28.5px/37px "Liberation Sans", sans-serif;color:#dedede;letter-spacing:-1.117px;'>Graph overview</span>
<svg style="left:637px;top:1387px;" width="128" height="21" viewBox="0 0 128 21"><g fill="#222"><rect x="0" y="0" width="32" height="20.4" rx="3.5"/><rect x="47" y="0" width="32" height="20.4" rx="3.5"/><rect x="94" y="0" width="32" height="20.4" rx="3.5"/></g>
<g fill="#353739"><path d="M4.1 0h25.2v20.4h-2.4V6H6.4v14.4H4.1z"/>
<path d="M61 0h15v12.7h-5V20.4H56V5h5zM64 3.3v1.7h6.5v5.2H73V3.3zM58.4 11v6.7h10V11z" fill-rule="evenodd"/></g>
<path d="M100.7 1.6L120 19M120 1.6L100.7 19" stroke="#353739" stroke-width="3.4"/></svg>
<div style="left:0px;top:1419px;width:766px;height:242px;background:#b4b4b4;"></div>
<div style="left:54px;top:1420px;width:395px;height:240px;background:#f4f4f4;border:1px solid #000;box-sizing:border-box;box-shadow:3px 3px 3px rgba(0,0,0,.35);"></div>
<div style="left:452px;top:1420px;width:259px;height:119px;background:#2d2d2d;border:1px solid #000;box-sizing:border-box;box-shadow:3px 3px 3px rgba(0,0,0,.35);"></div>
<div style="left:710px;top:1420px;width:1px;height:240px;background-image:repeating-linear-gradient(#fff 0 1px,transparent 1px 2px);"></div>
<div style="left:770px;top:230px;width:3070px;height:48px;background:linear-gradient(#565656,#3d3d3d);"></div>
<div style="left:770px;top:230px;width:512px;height:48px;background:#787878;"></div>
<div style="left:766px;top:230px;width:4px;height:1431px;background:#353535;"></div>
<svg style="left:800.0px;top:245px;" width="16" height="16" viewBox="0 0 16 16"><rect x=".6" y=".6" width="11" height="12" fill="#fff" stroke="#4a8ae8" stroke-width="1"/><rect x=".6" y=".6" width="11" height="2.4" fill="#3a7ae8"/><rect x="5" y="4" width="10.4" height="11.4" fill="#fff" stroke="#2a4ab8" stroke-width="1"/><path d="M7 6.6h6.4M7 9h6.4M7 11.2h6.4M7 13.4h4" stroke="#2a3a8a" stroke-width="1"/></svg>
<span class="t" style='left:945.5px;top:235.10px;font:30px/39px "Liberation Sans", sans-serif;color:#dcdcdc;letter-spacing:-1.65px;'>IDA View-A</span>
<svg style="left:1224.0px;top:248px;" width="14" height="13" viewBox="0 0 14 13"><rect x=".4" y=".4" width="13.2" height="12.2" rx="2.4" fill="#e2593a" stroke="#f08a6a" stroke-width=".8"/><path d="M4 3.6l6 5.8M10 3.6l-6 5.8" stroke="#fff" stroke-width="2"/></svg>
<svg style="left:1311.67px;top:248px;" width="16" height="16" viewBox="0 0 16 16"><rect x=".6" y=".6" width="14.8" height="14.8" fill="#eef2ff" stroke="#5a8ae8" stroke-width="1"/><rect x=".6" y=".6" width="14.8" height="2.6" fill="#3a7ae8"/><path d="M8 4.6l4 2.3v4.4l-4 2.3l-4-2.3V6.9z" fill="none" stroke="#2a2ad8" stroke-width="1.2"/></svg>
<span class="t" style='left:1456.8px;top:237.60px;font:30px/39px "Liberation Sans", sans-serif;color:#dcdcdc;letter-spacing:-2.033px;'>Hex View-1</span>
<svg style="left:1734.67px;top:250px;" width="15" height="14" viewBox="0 0 15 14"><rect x=".4" y=".4" width="13.8" height="13.2" rx="2.6" fill="#cfcfcf" stroke="#e8e8e8" stroke-width=".8"/><path d="M4.4 4.2l5.8 5.6M10.2 4.2l-5.8 5.6" stroke="#4a4a4a" stroke-width="1.9"/></svg>
<svg style="left:1823.3400000000001px;top:248px;" width="16" height="16" viewBox="0 0 16 16"><rect x=".6" y=".6" width="14.8" height="14.8" fill="#eef2ff" stroke="#5a8ae8" stroke-width="1"/><rect x=".6" y=".6" width="14.8" height="2.6" fill="#3a7ae8"/><path d="M5 14L8 5L11 14M6 11h4M4 14h3M9 14h3" stroke="#1a2a8a" stroke-width="1.2" fill="none"/></svg>
<span class="t" style='left:1975.45px;top:237.60px;font:30px/39px "Liberation Sans", sans-serif;color:#dcdcdc;letter-spacing:-1.606px;'>Structures</span>
<svg style="left:2246.34px;top:250px;" width="15" height="14" viewBox="0 0 15 14"><rect x=".4" y=".4" width="13.8" height="13.2" rx="2.6" fill="#cfcfcf" stroke="#e8e8e8" stroke-width=".8"/><path d="M4.4 4.2l5.8 5.6M10.2 4.2l-5.8 5.6" stroke="#4a4a4a" stroke-width="1.9"/></svg>
<svg style="left:2335.01px;top:248px;" width="16" height="16" viewBox="0 0 16 16"><rect x=".6" y=".6" width="14.8" height="14.8" fill="#eef2ff" stroke="#5a8ae8" stroke-width="1"/><rect x=".6" y=".6" width="14.8" height="2.6" fill="#3a7ae8"/><path d="M3 6h1.6M3 9h1.6M3 12h1.6M6.4 6h6.4M6.4 9h6.4M6.4 12h6.4" stroke="#1a2a8a" stroke-width="1.3"/></svg>
<span class="t" style='left:2507.4px;top:237.60px;font:30px/39px "Liberation Sans", sans-serif;color:#dcdcdc;letter-spacing:-2.662px;'>Enums</span>
<svg style="left:2758.01px;top:250px;" width="15" height="14" viewBox="0 0 15 14"><rect x=".4" y=".4" width="13.8" height="13.2" rx="2.6" fill="#cfcfcf" stroke="#e8e8e8" stroke-width=".8"/><path d="M4.4 4.2l5.8 5.6M10.2 4.2l-5.8 5.6" stroke="#4a4a4a" stroke-width="1.9"/></svg>
<svg style="left:2846.6800000000003px;top:248px;" width="16" height="16" viewBox="0 0 16 16"><rect x=".6" y=".6" width="14.8" height="14.8" fill="#eef2ff" stroke="#5a8ae8" stroke-width="1"/><rect x=".6" y=".6" width="14.8" height="2.6" fill="#3a7ae8"/><path d="M8.6 7h5M8.6 9.6h5M8.6 12.2h5" stroke="#1a2a8a" stroke-width="1.2"/><path d="M1.6 5.4l5.6 2.8L4.4 9.4l2 3.4l-1.6 1l-2-3.4L1 12.4z" fill="#1ca43a" stroke="#0a5a1a" stroke-width=".5"/></svg>
<span class="t" style='left:3011.1px;top:237.60px;font:30px/39px "Liberation Sans", sans-serif;color:#dcdcdc;letter-spacing:-0.567px;'>Imports</span>
<svg style="left:3269.6800000000003px;top:250px;" width="15" height="14" viewBox="0 0 15 14"><rect x=".4" y=".4" width="13.8" height="13.2" rx="2.6" fill="#cfcfcf" stroke="#e8e8e8" stroke-width=".8"/><path d="M4.4 4.2l5.8 5.6M10.2 4.2l-5.8 5.6" stroke="#4a4a4a" stroke-width="1.9"/></svg>
<svg style="left:3358.35px;top:248px;" width="16" height="16" viewBox="0 0 16 16"><rect x=".6" y=".6" width="14.8" height="14.8" fill="#eef2ff" stroke="#5a8ae8" stroke-width="1"/><rect x=".6" y=".6" width="14.8" height="2.6" fill="#3a7ae8"/><path d="M2.4 7h5M2.4 9.6h5M2.4 12.2h5" stroke="#1a2a8a" stroke-width="1.2"/><path d="M8 7.6h3V5.2l4.6 4l-4.6 4v-2.4H8z" fill="#1ca43a" stroke="#0a5a1a" stroke-width=".5"/></svg>
<span class="t" style='left:3525.4px;top:237.60px;font:30px/39px "Liberation Sans", sans-serif;color:#dcdcdc;letter-spacing:-1.675px;'>Exports</span>
<svg style="left:3781.35px;top:250px;" width="15" height="14" viewBox="0 0 15 14"><rect x=".4" y=".4" width="13.8" height="13.2" rx="2.6" fill="#cfcfcf" stroke="#e8e8e8" stroke-width=".8"/><path d="M4.4 4.2l5.8 5.6M10.2 4.2l-5.8 5.6" stroke="#4a4a4a" stroke-width="1.9"/></svg>
<div style="left:770px;top:278px;width:3070px;height:1345px;background:#b4b4b4;"></div>
<svg width="0" height="0" style="left:0;top:0"><defs><linearGradient id="rb" x1="0" x2="1"><stop offset="0" stop-color="#ff8a00"/><stop offset=".14" stop-color="#ffff00"/><stop offset=".34" stop-color="#00ff00"/><stop offset=".54" stop-color="#00ffff"/><stop offset=".72" stop-color="#0000ff"/><stop offset=".9" stop-color="#ff00ff"/><stop offset="1" stop-color="#ff0080"/></linearGradient><linearGradient id="wb" x1="0" y1="0" x2="0" y2="1"><stop offset="0" stop-color="#fff" stop-opacity=".95"/><stop offset=".4" stop-color="#fff" stop-opacity="0"/><stop offset=".6" stop-color="#000" stop-opacity="0"/><stop offset="1" stop-color="#000" stop-opacity=".95"/></linearGradient><linearGradient id="bl" x1="0" y1="0" x2="1" y2="1"><stop offset="0" stop-color="#2838c8"/><stop offset="1" stop-color="#000088"/></linearGradient><linearGradient id="tb" x1="0" y1="0" x2="1" y2="0"><stop offset="0" stop-color="#38c0fa"/><stop offset="1" stop-color="#2a50d8"/></linearGradient></defs></svg>
<div style="left:1587px;top:386px;width:1356px;height:824px;background:#2d2d2d;border:1px solid #000;box-sizing:border-box;box-shadow:3px 3px 3px rgba(0,0,0,.45);"></div>
<div style="left:1588px;top:387px;width:1354px;height:18px;background:#5c5654;"></div>
<div style="left:1588px;top:405px;width:1354px;height:1px;background:#000;"></div>
<svg style="left:1589px;top:388px;" width="56" height="16" viewBox="0 0 56 16"><rect x="0" y="0" width="16" height="15.8" fill="#00007e"/><rect x="1.1" y="1.1" width="13.8" height="13.6" fill="url(#rb)"/><rect x="1.1" y="1.1" width="13.8" height="13.6" fill="url(#wb)"/>
<g transform="translate(20,0)"><rect x=".3" y="6" width="15.6" height="9.7" fill="#00008a"/><rect x="1.5" y="7.2" width="13.2" height="7.3" fill="#fff"/><rect x="2.7" y="8.3" width="10.8" height="5.1" fill="url(#bl)"/><path d="M3.6 12.2L14.6 1.2" stroke="#e89008" stroke-width="3"/><path d="M4 11.6L14.2 1.4" stroke="#ffe9a0" stroke-width=".9"/><path d="M2.8 13l1.4-.3l-1-1z" fill="#111"/><path d="M13.6 .2l2.2 2.2" stroke="#7adcf4" stroke-width="2.2"/></g>
<g transform="translate(40,0)"><rect x=".4" y=".4" width="15.2" height="14.6" fill="#fff" stroke="#3c8cf0" stroke-width=".9"/><rect x=".4" y=".4" width="15.2" height="2.4" fill="url(#tb)"/><path d="M2.6 4.4v5.6h3M5 4.8h9.6M7.4 4.4v2.2M12.4 4.4v2.2" stroke="#1a2af0" stroke-width="1" fill="none"/><path d="M6 5.8h2.8L7.4 7.6zM11 5.8h2.8L12.4 7.6zM5.4 8.4L7.6 10L5.4 11.6zM4.4 12.2h1.2v1.2H4.4z" fill="#1a2af0"/><rect x="7.4" y="8.8" width="6.6" height="2.8" rx=".8" fill="#b80c58"/><rect x="8.4" y="9.6" width="4.8" height="1.1" fill="#f8a018"/></g></svg>
<div style="left:1588px;top:1093px;width:1354px;height:37px;background:#353535;"></div>
<div style="left:1588px;top:1092px;width:432px;height:38px;background:#cba136;"></div>
<div style="left:1590px;top:1054px;width:54px;height:39px;background:#52075a;"></div>
<div style="left:1574px;top:1087px;width:479px;height:49px;border:5px solid #ed1c24;box-sizing:border-box;"></div>
<span class="t c" style="left:1590px;top:486.31px"><span style="color:#757575">; Attributes: bp-based frame</span></span>
<span class="t c" style="left:1590px;top:562.31px"><span style="color:#8c7096">; int __cdecl main()</span></span>
<span class="t c" style="left:1590px;top:600.31px"><span style="color:#ffd400">_main</span><span style="color:#b4e61e"> proc near</span></span>
<span class="t c" style="left:1590px;top:676.31px"><span style="color:#ff8a1a">intAmid</span><span style="color:#c4c4c4">= dword ptr </span><span style="color:#de5a32">-4</span></span>
<span class="t c" style="left:1590px;top:752.31px"><span style="color:#ffffff">push    </span><span style="color:#74adad">ebp</span></span>
<span class="t c" style="left:1590px;top:790.31px"><span style="color:#ffffff">mov     </span><span style="color:#74adad">ebp</span><span style="color:#74adad">, </span><span style="color:#74adad">esp</span></span>
<span class="t c" style="left:1590px;top:828.31px"><span style="color:#ffffff">sub     </span><span style="color:#74adad">esp</span><span style="color:#74adad">, </span><span style="color:#de5a32">44h</span></span>
<span class="t c" style="left:1590px;top:866.31px"><span style="color:#ffffff">push    </span><span style="color:#74adad">ebx</span></span>
<span class="t c" style="left:1590px;top:904.31px"><span style="color:#ffffff">push    </span><span style="color:#74adad">esi</span></span>
<span class="t c" style="left:1590px;top:942.31px"><span style="color:#ffffff">push    </span><span style="color:#74adad">edi</span></span>
<span class="t c" style="left:1590px;top:980.31px"><span style="color:#ffffff">mov     </span><span style="color:#74adad">ecx</span><span style="color:#c4c4c4">, </span><span style="color:#c4c4c4">offset </span><span style="color:#f4ecb8">_9EC18996_FileName@cpp</span></span>
<span class="t c" style="left:1590px;top:1018.31px"><span style="color:#ffffff">call    </span><span style="color:#ffd400">j_@__CheckForDebuggerJustMyCode@4</span><span style="color:#757575"> ; __CheckForDebuggerJustMyCode(x)</span></span>
<span class="t c" style="left:1590px;top:1056.31px"><span style="color:#ffffff">nop     </span></span>
<span class="t c" style="left:1590px;top:1094.31px"><span style="color:#ffffff">nop     </span></span>
<span class="t c" style="left:1590px;top:1132.31px"><span style="color:#ffffff">inc     </span><span style="color:#74adad">ebp</span></span>
<span class="t c" style="left:1590px;top:1170.31px"><span style="color:#ffffff">cld     </span></span>
<div style="left:2953px;top:386px;width:900px;height:406px;background:#2d2d2d;border:1px solid #000;box-sizing:border-box;box-shadow:3px 3px 3px rgba(0,0,0,.45);"></div>
<div style="left:2954px;top:387px;width:898px;height:18px;background:#f4f4f4;"></div>
<div style="left:2954px;top:405px;width:898px;height:1px;background:#000;"></div>
<svg style="left:2955px;top:388px;" width="56" height="16" viewBox="0 0 56 16"><rect x="0" y="0" width="16" height="15.8" fill="#00007e"/><rect x="1.1" y="1.1" width="13.8" height="13.6" fill="url(#rb)"/><rect x="1.1" y="1.1" width="13.8" height="13.6" fill="url(#wb)"/>
<g transform="translate(20,0)"><rect x=".3" y="6" width="15.6" height="9.7" fill="#00008a"/><rect x="1.5" y="7.2" width="13.2" height="7.3" fill="#fff"/><rect x="2.7" y="8.3" width="10.8" height="5.1" fill="url(#bl)"/><path d="M3.6 12.2L14.6 1.2" stroke="#e89008" stroke-width="3"/><path d="M4 11.6L14.2 1.4" stroke="#ffe9a0" stroke-width=".9"/><path d="M2.8 13l1.4-.3l-1-1z" fill="#111"/><path d="M13.6 .2l2.2 2.2" stroke="#7adcf4" stroke-width="2.2"/></g>
<g transform="translate(40,0)"><rect x=".4" y=".4" width="15.2" height="14.6" fill="#fff" stroke="#3c8cf0" stroke-width=".9"/><rect x=".4" y=".4" width="15.2" height="2.4" fill="url(#tb)"/><path d="M2.6 4.4v5.6h3M5 4.8h9.6M7.4 4.4v2.2M12.4 4.4v2.2" stroke="#1a2af0" stroke-width="1" fill="none"/><path d="M6 5.8h2.8L7.4 7.6zM11 5.8h2.8L12.4 7.6zM5.4 8.4L7.6 10L5.4 11.6zM4.4 12.2h1.2v1.2H4.4z" fill="#1a2af0"/><rect x="7.4" y="8.8" width="6.6" height="2.8" rx=".8" fill="#b80c58"/><rect x="8.4" y="9.6" width="4.8" height="1.1" fill="#f8a018"/></g></svg>
<span class="t c" style="left:2956px;top:411.21px"><span style="color:#ffffff">mov     </span><span style="color:#f4ecb8">?obj@@3UMyStruct@@A.var</span><span style="color:#f4ecb8">, </span><span style="color:#de5a32">1</span><span style="color:#757575"> ; MyStruct obj</span></span>
<span class="t c" style="left:2956px;top:449.21px"><span style="color:#ffffff">xor     </span><span style="color:#74adad">eax</span><span style="color:#74adad">, </span><span style="color:#74adad">eax</span></span>
<span class="t c" style="left:2956px;top:487.21px"><span style="color:#ffffff">pop     </span><span style="color:#74adad">edi</span></span>
<span class="t c" style="left:2956px;top:525.21px"><span style="color:#ffffff">pop     </span><span style="color:#74adad">esi</span></span>
<span class="t c" style="left:2956px;top:563.21px"><span style="color:#ffffff">pop     </span><span style="color:#74adad">ebx</span></span>
<span class="t c" style="left:2956px;top:601.21px"><span style="color:#ffffff">mov     </span><span style="color:#74adad">esp</span><span style="color:#74adad">, </span><span style="color:#74adad">ebp</span></span>
<span class="t c" style="left:2956px;top:639.21px"><span style="color:#ffffff">pop     </span><span style="color:#74adad">ebp</span></span>
<span class="t c" style="left:2956px;top:677.21px"><span style="color:#ffffff">retn    </span></span>
<span class="t c" style="left:2956px;top:715.21px"><span style="color:#ffd400">_main</span><span style="color:#ff3a3a"> endp ; sp-analysis failed</span></span>
<div style="left:766px;top:1623px;width:3074px;height:38px;background:#353535;"></div>
<div style="left:770.5px;top:1626px;width:115.0px;height:34px;border:1px solid #4c4c4c;box-sizing:border-box;border-radius:2px;"></div>
<span class="t" style='left:774.5px;top:1628.47px;font:24.5px/32px "Liberation Mono", monospace;color:#c6c6c6;letter-spacing:1.0px;'>100.00%</span>
<div style="left:889px;top:1626px;width:178.5px;height:34px;border:1px solid #4c4c4c;box-sizing:border-box;border-radius:2px;"></div>
<span class="t" style='left:893px;top:1628.47px;font:24.5px/32px "Liberation Mono", monospace;color:#c6c6c6;letter-spacing:1.0px;'>(-817,-108)</span>
<div style="left:1070px;top:1626px;width:163px;height:34px;border:1px solid #4c4c4c;box-sizing:border-box;border-radius:2px;"></div>
<span class="t" style='left:1074px;top:1628.47px;font:24.5px/32px "Liberation Mono", monospace;color:#c6c6c6;letter-spacing:1.0px;'>(1525,669)</span>
<div style="left:1236.5px;top:1626px;width:130.5px;height:34px;border:1px solid #4c4c4c;box-sizing:border-box;border-radius:2px;"></div>
<span class="t" style='left:1240.5px;top:1628.47px;font:24.5px/32px "Liberation Mono", monospace;color:#c6c6c6;letter-spacing:1.0px;'>00000474</span>
<div style="left:1370px;top:1626px;width:292px;height:34px;border:1px solid #4c4c4c;box-sizing:border-box;border-radius:2px;"></div>
<span class="t" style='left:1374px;top:1628.47px;font:24.5px/32px "Liberation Mono", monospace;color:#c6c6c6;letter-spacing:1.0px;'>00411074: _main+14</span>
<div style="left:1664.5px;top:1626px;width:482.5px;height:34px;border:1px solid #4c4c4c;box-sizing:border-box;border-radius:2px;"></div>
<span class="t" style='left:1668.5px;top:1628.47px;font:24.5px/32px "Liberation Mono", monospace;color:#c6c6c6;letter-spacing:1.0px;'>(Synchronized with Hex View-1)</span>
<div style="left:0px;top:1661px;width:3840px;height:47px;background:#353535;"></div>
<svg style="left:4px;top:1676.5px;" width="16" height="16" viewBox="0 0 16 16"><rect x=".6" y=".6" width="14.8" height="14.8" fill="#f0f4ff" stroke="#3a7ae8" stroke-width="1"/><rect x=".6" y=".6" width="14.8" height="2.6" fill="#18b0d8"/><path d="M3 6h10M3 8.4h10M3 10.8h10M3 13.2h10" stroke="#222" stroke-width="1.1"/></svg>
<span class="t" style='left:33.52px;top:1665.92px;font:28.5px/37px "Liberation Sans", sans-serif;color:#dedede;letter-spacing:-0.603px;'>Output</span>
<svg style="left:3711px;top:1676px;" width="128" height="21" viewBox="0 0 128 21"><g fill="#222"><rect x="0" y="0" width="32" height="20.4" rx="3.5"/><rect x="47" y="0" width="32" height="20.4" rx="3.5"/><rect x="94" y="0" width="32" height="20.4" rx="3.5"/></g>
<g fill="#353739"><path d="M4.1 0h25.2v20.4h-2.4V6H6.4v14.4H4.1z"/>
<path d="M61 0h15v12.7h-5V20.4H56V5h5zM64 3.3v1.7h6.5v5.2H73V3.3zM58.4 11v6.7h10V11z" fill-rule="evenodd"/></g>
<path d="M100.7 1.6L120 19M120 1.6L100.7 19" stroke="#353739" stroke-width="3.4"/></svg>
<div style="left:0px;top:1708px;width:3840px;height:270px;background:#353535;border:1px solid #7c7c7c;box-sizing:border-box;"></div>
<span class="t c" style="left:7.6px;top:1714.01px"><span style="color:#dcdcdc">---------------------------------------------------------------------------------------</span></span>
<span class="t c" style="left:7.6px;top:1751.31px"><span style="color:#dcdcdc">Python 3.9.0 (tags/v3.9.0:9cf6752, Oct  5 2020, 15:34:40) [MSC v.1927 64 bit (AMD64)]</span></span>
<span class="t c" style="left:7.6px;top:1789.21px"><span style="color:#dcdcdc">IDAPython v7.4.0 final (serial 0) (c) The IDAPython Team &lt;idapython@googlegroups.com&gt;</span></span>
<span class="t c" style="left:7.6px;top:1826.61px"><span style="color:#dcdcdc">---------------------------------------------------------------------------------------</span></span>
<span class="t c" style="left:7.6px;top:1865.01px"><span style="color:#dcdcdc">Propagating type information...</span></span>
<span class="t c" style="left:7.6px;top:1903.21px"><span style="color:#dcdcdc">Function argument information has been propagated</span></span>
<span class="t c" style="left:7.6px;top:1941.21px"><span style="color:#dcdcdc">The initial autoanalysis has been finished.</span></span>
<div style="left:83px;top:1709px;width:10px;height:1.6px;background:#c4c4c4;border-radius:0 0 5px 5px;"></div>
<div style="left:262px;top:1709px;width:10px;height:1.6px;background:#c4c4c4;border-radius:0 0 5px 5px;"></div>
<div style="left:3822px;top:1941px;width:14px;height:33px;background:#5c5c5c;border-radius:7px;"></div>
<div style="left:0px;top:1978px;width:3840px;height:42px;background:#353535;"></div>
<span class="t" style='left:6.16px;top:1981.80px;font:28px/36px "Liberation Sans", sans-serif;color:#dedede;letter-spacing:-0.692px;'>Python</span>
<div style="left:98px;top:1979px;width:3740px;height:41px;border:1px solid #474747;box-sizing:border-box;border-radius:3px;"></div>
<div style="left:0px;top:2020px;width:3840px;height:40px;background:#353535;"></div>
<div style="left:0.5px;top:2024px;width:200.5px;height:34px;border:1px solid #4c4c4c;box-sizing:border-box;border-radius:2px;"></div>
<span class="t" style='left:3.0px;top:2025.24px;font:26.5px/34px "Liberation Mono", monospace;color:#c6c6c6;letter-spacing:2.1px;'>AU:  idle</span>
<div style="left:204.5px;top:2024px;width:75.0px;height:34px;border:1px solid #4c4c4c;box-sizing:border-box;border-radius:2px;"></div>
<span class="t" style='left:207.0px;top:2025.24px;font:26.5px/34px "Liberation Mono", monospace;color:#c6c6c6;letter-spacing:2.1px;'>Down</span>
<div style="left:282.5px;top:2024px;width:183.5px;height:34px;border:1px solid #4c4c4c;box-sizing:border-box;border-radius:2px;"></div>
<span class="t" style='left:285.0px;top:2025.24px;font:26.5px/34px "Liberation Mono", monospace;color:#c6c6c6;letter-spacing:2.1px;'>Disk: 17GB</span>
<div style="left:0px;top:2060px;width:3840px;height:100px;background:linear-gradient(90deg,#1b1b1b 0,#1c1c1c 45%,#26251b 58%,#1d1d1c 70%,#2a291c 86%,#2c2b1e 100%);"></div>
<div style="left:0px;top:2160px;width:3840px;height:48px;background:#ffffff;"></div>
<svg style="left:40px;top:2090px;" width="41" height="41" viewBox="0 0 41 41"><path d="M0 5.6L16.6 3.3V19.6H0zM18.6 3L41 0V19.6H18.6zM0 21.6H16.6V37.8L0 35.5zM18.6 21.6H41V41L18.6 38z" fill="#fff"/></svg>
<div style="left:120px;top:2060px;width:720px;height:100px;background:#f2f2f2;border:3px solid #c8c8c8;box-sizing:border-box;border-bottom-width:3px;"></div>
<svg style="left:150px;top:2084px;" width="56" height="52" viewBox="0 0 56 52"><circle cx="32.3" cy="19.3" r="14.6" fill="none" stroke="#111" stroke-width="3.2"/><path d="M22 29.8L3.5 48.5" stroke="#111" stroke-width="3.6" stroke-linecap="round"/></svg>
<span class="t" style='left:232.86px;top:2089.18px;font:37px/48px "Liberation Sans", sans-serif;color:#1c1c1c;letter-spacing:-0.096px;'>Type here to search</span>
<svg style="left:650px;top:2070px;" width="180" height="80" viewBox="0 0 180 80"><defs><linearGradient id="sg" x1="0" y1="0" x2="0" y2="1"><stop offset="0" stop-color="#ffd83a"/><stop offset="1" stop-color="#f4ae18"/></linearGradient></defs><path d="M70.7 12.0 77.0 31.7 96.7 38.0 77.0 44.3 70.7 64.0 64.4 44.3 44.7 38.0 64.4 31.7Z" fill="url(#sg)" stroke="url(#sg)" stroke-width="7.8" stroke-linejoin="round"/><path d="M127.0 36.6 129.9 45.7 139.0 48.6 129.9 51.5 127.0 60.6 124.1 51.5 115.0 48.6 124.1 45.7Z" fill="url(#sg)" stroke="url(#sg)" stroke-width="3.6" stroke-linejoin="round"/><path d="M25.1 51.5 24.9 58.7 30.5 63.1 23.3 62.9 18.9 68.5 19.1 61.3 13.5 56.9 20.7 57.1Z" fill="#1ba8ee" stroke="#1ba8ee" stroke-width="2.7" stroke-linejoin="round"/><circle cx="111.5" cy="14.8" r="5.2" fill="#f2612a"/><circle cx="157.4" cy="64" r="5.2" fill="#8ac43a"/></svg>
<svg style="left:879px;top:2091px;" width="42" height="39" viewBox="0 0 42 39"><g stroke="#fff" stroke-width="2.4" fill="none"><rect x="2.6" y="12" width="22" height="15"/><path d="M1.2 0v7.5h24.4V0M1.2 39v-7.5h24.4V39M37.6 0v12M37.6 21v18"/></g><circle cx="37.6" cy="16" r="3" fill="#fff"/></svg>
<svg style="left:996.0999999999999px;top:2078px;" width="64" height="64" viewBox="-32 -32 64 64"><defs><linearGradient id="ps" x1="0" y1="0" x2="1" y2="1"><stop offset="0" stop-color="#8e2410"/><stop offset="1" stop-color="#b5371b"/></linearGradient></defs><circle r="30" fill="#c13a1d"/><path d="M18.4 -19.3L29 -8A30 30 0 0 1 9 28.6L-5.3 21.4L-2.5 9.1L14.2 9.1Z" fill="#ac3419"/><path d="M.9 -12.7L9.9 -12.7L7.4 2.5L-1.5 2.5Z" fill="url(#ps)"/><path d="M-13.8 -19.3L18.4 -19.3L14.2 9.1L-2.5 9.1L-5.3 21.4L-11.9 19.5L-5.9 -13.6L-16.7 -14.6ZM.9 -12.7L9.9 -12.7L7.4 2.5L-1.5 2.5Z" fill="#fff" fill-rule="evenodd"/></svg>
<svg style="left:1120.1px;top:2078px;" width="64" height="64" viewBox="-32 -32 64 64"><path d="M-27 8C-27-12-6-20 10-16C26-12 26 4 16 10C8 15 10 22-2 24C-18 26-27 20-27 8z" fill="#b8d8ee"/><path d="M-27 8C-27-4-20-12-10-15C-18-6-20 10-8 22C-20 22-27 18-27 8z" fill="#e8f2fa"/><circle cx="-20" cy="4" r="4.4" fill="#e03a2a"/><circle cx="-11" cy="-5" r="4.8" fill="#38b838"/><circle cx="2" cy="-9" r="4.8" fill="#f0b818"/><circle cx="-7" cy="8" r="3.4" fill="#222"/><path d="M-4 26L14 -14L19 -12L0 27z" fill="#e87a1a"/><path d="M14 -14L18 -27Q24 -28 27 -22L19 -12z" fill="#e8c89a"/><path d="M13 -12l6 2" stroke="#b01818" stroke-width="2.4"/></svg>
<svg style="left:1244.1px;top:2078px;" width="64" height="64" viewBox="-32 -32 64 64"><ellipse cx="-8.5" cy="5.3" rx="21" ry="8.6" transform="rotate(-10 -8.5 5.3)" fill="#8a8a8a" stroke="#c03030" stroke-width="1"/><ellipse cx="-2.3" cy="-12.3" rx="24.6" ry="12" transform="rotate(-20 -2.3 -12.3)" fill="#f6f4f4" stroke="#d83a3a" stroke-width="1.2"/><path d="M-14 -10L10 -18M-12 -4L4 -9" stroke="#c8c8c8" stroke-width="1.5"/><path d="M-3.8 -21.2L6.6 10" stroke="#8e9398" stroke-width="3.2"/><path d="M-19.5 -8L14.2 6.3" stroke="#a8adb2" stroke-width="3.2"/><ellipse cx="6.3" cy="18.6" rx="5.6" ry="10.4" transform="rotate(10 6.3 18.6)" fill="none" stroke="#1a8ad8" stroke-width="3.6"/><ellipse cx="17" cy="10" rx="10" ry="5.6" transform="rotate(-28 17 10)" fill="none" stroke="#1a8ad8" stroke-width="3.6"/></svg>
<svg style="left:1368.1px;top:2078px;" width="64" height="64" viewBox="-32 -32 64 64"><defs><linearGradient id="e1" x1="0" y1="0" x2="1" y2="0"><stop offset="0" stop-color="#2a9be0"/><stop offset=".55" stop-color="#2cc3c0"/><stop offset="1" stop-color="#6fd34a"/></linearGradient><linearGradient id="e2" x1="0" y1="0" x2="0" y2="1"><stop offset="0" stop-color="#1a78c8"/><stop offset="1" stop-color="#0c4c98"/></linearGradient><linearGradient id="e3" x1="0" y1="0" x2="1" y2="1"><stop offset="0" stop-color="#0c5ab0"/><stop offset="1" stop-color="#1a9ad0"/></linearGradient></defs><path d="M-30 2A30 30 0 0 1 30 -2C30 10 20 14 12 14C4 14 0 8 2 2C-4 -8 -24 -10 -30 2z" fill="url(#e1)"/><path d="M-30 2C-24-12-4-10 2 0C-6 4-8 16 2 24C8 28 18 27 27 14C22 26 8 32-4 30C-20 28-30 16-30 2z" fill="url(#e2)"/><path d="M-30 2C-30 20-14 32 2 30C-10 26-18 14-16 2C-15-6-8-10-2-8C-12-14-26-10-30 2z" fill="url(#e3)"/></svg>
<svg style="left:1492.1px;top:2078px;" width="64" height="64" viewBox="-32 -32 64 64"><circle r="29.6" fill="#2da94f"/><path d="M-26 -15A30 30 0 0 1 26 -15L0 -15L-13 7.5Z" fill="#e33e2b"/><path d="M-26 -15A30 30 0 0 1 26 -15L0 -15L-13 7.5Z" fill="#fbc116" transform="rotate(120)"/><path d="M-26 -15A30 30 0 0 1 26 -15L0 -15L-13 7.5Z" fill="#2da94f" transform="rotate(240)"/><circle r="14.6" fill="#fff"/><circle r="11.6" fill="#3b7ff0"/></svg>
<svg style="left:1616.1px;top:2078px;" width="64" height="64" viewBox="-32 -32 64 64"><defs><linearGradient id="f1" x1=".8" y1="0" x2=".2" y2="1"><stop offset="0" stop-color="#ffe226"/><stop offset=".45" stop-color="#ff8a16"/><stop offset="1" stop-color="#f02a6a"/></linearGradient><radialGradient id="f2"><stop offset="0" stop-color="#9a4ae8"/><stop offset="1" stop-color="#5a2ab8"/></radialGradient></defs><path d="M-26 0C-28-10-22-20-16-24C-16-18-12-14-8-14C-2-26 6-28 8-32C12-22 22-16 26-4C30 12 18 30 0 30C-16 30-26 16-26 0z" fill="url(#f1)"/><circle cx="1" cy="4" r="14" fill="url(#f2)"/><path d="M-18-10C-10-10-4-8 2-2C-4-2-8 0-10 6C-16 2-20-4-18-10z" fill="#ff9a1a"/></svg>
<svg style="left:1740.1px;top:2078px;" width="64" height="64" viewBox="-32 -32 64 64"><path d="M-11.7 -23.2L26.2 -11.8V12.8L-11.7 .5Z" fill="#e8eef2"/><path d="M-10 -21L24.6 -10.6V10.6L-10 -.8Z" fill="#3aacf4"/><path d="M-10 -21L24.6 -10.6L-10 2Z" fill="#5cc4ff" opacity=".55"/><path d="M8 8.2L14 5.6L16 10.4L19.5 12L12 15.4L4.6 12.6Z" fill="#c4cacf"/><path d="M-26 15.6L.6 10.9L16.7 19.4L2.5 24.7Z" fill="#d4d9dd"/><path d="M-22 15.8L.2 12.2L12.6 19L2.4 22.8Z" fill="#b4babf" opacity=".8"/></svg>
<svg style="left:1864.1px;top:2078px;" width="64" height="64" viewBox="-32 -32 64 64"><path d="M-26 -22h16l4 5h32v10h-52z" fill="#e8a818"/><rect x="-26" y="-12" width="52" height="34" rx="2" fill="#ffd658"/><path d="M-26 4h52v16a2 2 0 0 1-2 2h-48a2 2 0 0 1-2-2z" fill="#f4c23a"/><path d="M-16 22V8h32v14h-8v-7h-16v7z" fill="#3a8ad8"/></svg>
<svg style="left:1988.1px;top:2078px;" width="64" height="64" viewBox="-32 -32 64 64"><rect x="-11.5" y="-25.5" width="37" height="37" rx="5.5" fill="none" stroke="#0c98d8" stroke-width="8.6"/><rect x="-25.5" y="-11.5" width="37" height="37" rx="5.5" fill="none" stroke="#f28c06" stroke-width="8.6"/><path d="M-11.5 -5V-20q0-5.5 5.5-5.5H8" fill="none" stroke="#0c98d8" stroke-width="8.6"/></svg>
<svg style="left:2112.1px;top:2078px;" width="64" height="64" viewBox="-32 -32 64 64"><rect x="-30" y="-30" width="60" height="60" rx="4" fill="#6422c8"/><path d="M16.2 -13.5L-5.7 0L16.2 13.8z" fill="#9c7ae8"/><path d="M-16.6 -14L6.6 0L-16.6 14.4z" fill="#fff" stroke="#fff" stroke-width="1.2" stroke-linejoin="round"/></svg>
<svg style="left:2236.1px;top:2078px;" width="64" height="64" viewBox="-32 -32 64 64"><defs><linearGradient id="tg" x1="0" y1="0" x2="0" y2="1"><stop offset="0" stop-color="#34aae8"/><stop offset="1" stop-color="#1684c4"/></linearGradient></defs><circle r="26.8" fill="url(#tg)"/><path d="M-16.5 1.4L12.5 -10.6Q14.6 -11.2 14 -8.6L9.6 12.6Q9 15 6.6 13.6L-.6 8.2L-4.4 11.8L-3.6 5L8 -6L-8.2 4.2z" fill="#fff"/></svg>
<svg style="left:2360.1px;top:2078px;" width="64" height="64" viewBox="-32 -32 64 64"><path d="M16.4 29.6L-22 -4L-27.7 -12L-18.5 -21L16.4 9Z" fill="#a472dc"/><path d="M16.4 -29.6L-22 4L-27.7 12L-18.5 21L16.4 -9Z" fill="#8a58c8"/><path d="M-27.7 -12L-22 -7.6V7.6L-27.7 12Z" fill="#6c44a4"/><path d="M16.4 -29.6L31.8 -20.4V20.8L16.4 29.6Z" fill="#c794f6"/></svg>
<div style="left:2456px;top:2060px;width:121px;height:100px;background:#50504a;"></div>
<svg style="left:2456px;top:2060px;" width="124" height="100" viewBox="0 0 124 100"><defs><linearGradient id="sk" x1="0" y1="0" x2="1" y2="0"><stop offset="0" stop-color="#e4c094"/><stop offset=".35" stop-color="#f8e6c4"/><stop offset="1" stop-color="#d8a878"/></linearGradient></defs>
<path d="M31 40Q29.5 31 39 26.5Q49 23 58 26.5Q66 30 70 40L88 47Q90.5 56 84 60Q87 68 80.5 72L78.5 79.5L58 79.5L44 60Z" fill="#17141a"/>
<path d="M50 68L63 58Q67 66 72 70Q77.5 74 77.6 80L49 80Q50 74 47.5 70Z" fill="url(#sk)"/>
<path d="M36.2 45Q37.5 35 46 31.2Q52.5 29.5 56 36Q60 42 60.5 50Q62.5 55 62 60L63.5 65Q59 70 52 69Q46 70 42 66Q39.5 62.5 40.5 58.5Q36 52 36.2 45Z" fill="url(#sk)"/>
<path d="M47 30Q55 27 60 34Q65 42 64 52Q66 58 65 64L61.5 66Q63 58 60.2 50Q60 41 54.5 35Q51 31 47 30Z" fill="#2a1a14"/>
<path d="M43.4 45L41 55.5L44 56" stroke="#c09068" stroke-width="1" fill="none"/>
<ellipse cx="52" cy="56.5" rx="4.2" ry="3.4" fill="#e89888" opacity=".55"/>
<ellipse cx="38.6" cy="46.4" rx="1.7" ry=".9" fill="#4a382c"/><ellipse cx="50.6" cy="47" rx="2.3" ry="1.2" fill="#32241c"/>
<path d="M36.8 44.6Q39 43.4 41 44.4M47.4 44.6Q51 43 54.6 45" stroke="#6a4a38" stroke-width=".8" fill="none"/>
<ellipse cx="43.2" cy="60.6" rx="3" ry="1.5" fill="#b4452c"/>
<ellipse cx="62.2" cy="62.6" rx="1.1" ry="2.2" fill="#f4f0ec"/>
<path d="M47.5 74.6Q58 74 66.5 66.5" stroke="#f0e8e0" stroke-width="1.5" stroke-dasharray="1.3 .9" fill="none"/>
<rect x="62.4" y="20.5" width="27" height="25.6" rx="3" fill="#35bcc0" stroke="#40cccc" stroke-width="1.2"/>
<path d="M64 29Q69 27.6 72.4 32Q74 35 76.4 34Q80.6 33 83 37Q86.4 38.4 87 42L87 44.4L64 44.4Z" fill="#14363a"/>
<circle cx="83.4" cy="66.5" r="6.3" fill="#3a14c8"/><text x="80.8" y="69.8" font-family="Liberation Sans" font-weight="bold" font-size="9.4" fill="#fff" text-anchor="middle" textLength="10.6" lengthAdjust="spacingAndGlyphs">32</text></svg>
<div style="left:1598px;top:2155px;width:101px;height:5px;background:#76b9ed;"></div>
<div style="left:1846px;top:2155px;width:101px;height:5px;background:#76b9ed;"></div>
<div style="left:2342px;top:2155px;width:101px;height:5px;background:#76b9ed;"></div>
<div style="left:2456px;top:2155px;width:121px;height:5px;background:#76b9ed;"></div>
<svg style="left:2858px;top:2089px;" width="60" height="38" viewBox="0 0 60 38"><defs><linearGradient id="dw" x1="0" y1="0" x2="1" y2="1"><stop offset="0" stop-color="#ee6408"/><stop offset="1" stop-color="#d84408"/></linearGradient></defs><g fill="none" stroke-linecap="round" stroke-width="10.4"><path d="M4.6 8.3L14.7 18.4" stroke="#8a1c12"/><path d="M16.2 21.2L28 9.4" stroke="#c63c08"/><path d="M29.4 8L50 28.6" stroke="url(#dw)"/></g><path d="M49.3 7.5q0-1.5 1.5-1.5h6.5q1.5 0 1.5 1.5v27q0 1.5-1.5 1.5h-26.8q-1.5 0-1.5-1.5v-8.4q0-1.5 1.5-1.5h18.8z" fill="url(#dw)"/></svg>
<span class="t" style='left:2936.92px;top:2088.03px;font:36px/47px "Liberation Sans", sans-serif;color:#fff;letter-spacing:-3.493px;'>DEWA</span>
<span class="t" style='left:3054.36px;top:2088.03px;font:36px/47px "Liberation Sans", sans-serif;color:#f06c6c;letter-spacing:-1.344px;'>-1.06%</span>
<svg style="left:3222px;top:2099px;" width="34" height="18" viewBox="0 0 34 18"><path d="M1.2 16.5L17 1.8L32.8 16.5" fill="none" stroke="#fff" stroke-width="2.4"/></svg>
<svg style="left:3278px;top:2094px;" width="42" height="28" viewBox="0 0 42 28"><g stroke="#fff" stroke-width="2.2" fill="none"><path d="M3 1v7M10 1v7M0.8 8h11.4v5q0 4-5.7 4q-5.7 0-5.7-4zM6.5 17v10"/><path d="M14 9.5h24v15.5H9.5M38 13h3v8h-3"/><path d="M20 13l7 8.5M27 13l-7 8.5" stroke-width="2.6"/></g></svg>
<svg style="left:3345px;top:2095px;" width="34" height="33" viewBox="0 0 34 33"><g fill="none" stroke="#fff" stroke-width="2.4"><path d="M1.4 32A31 31 0 0 1 32.4 1" opacity=".55"/><path d="M9.4 32A23 23 0 0 1 32.4 9"/><path d="M17.4 32A15 15 0 0 1 32.4 17"/></g><circle cx="28.6" cy="28.6" r="3.6" fill="#fff"/></svg>
<svg style="left:3398px;top:2093px;" width="43" height="37" viewBox="0 0 43 37"><g fill="none" stroke="#fff" stroke-width="2.2"><path d="M1.2 12h6.4L16 3.6V33.4L7.6 25H1.2z"/><path d="M21 12.6Q24.6 18.5 21 24.4"/><path d="M27.5 8Q33.5 18.5 27.5 29" opacity=".5"/><path d="M34 3.4Q42 18.5 34 33.6" opacity=".35"/></g></svg>
<span class="t" style='left:3463.8px;top:2092.11px;font:30px/39px "Liberation Sans", sans-serif;color:#fff;letter-spacing:-1.975px;'>ENG</span>
<span class="t" style='left:3568.3px;top:2068.80px;font:30px/39px "Liberation Sans", sans-serif;color:#fff;letter-spacing:-0.375px;'>6:37 PM</span>
<span class="t" style='left:3547.15px;top:2115.11px;font:30px/39px "Liberation Sans", sans-serif;color:#fff;letter-spacing:0.211px;'>12/24/2025</span>
<svg style="left:3736px;top:2089px;" width="62" height="62" viewBox="0 0 62 62"><path d="M1 0h40v30H12l-8 7v-7H1z" fill="#fff"/><path d="M9 9h24M9 15h24M9 21h24" stroke="#2a2a2a" stroke-width="1.8"/><circle cx="38.7" cy="39" r="19" fill="#4e4e4e" stroke="#9a9a9a" stroke-width="2"/><text x="38.2" y="48.4" font-family="Liberation Sans" font-size="27" fill="#fff" text-anchor="middle">1</text></svg>
<div style="left:3827.5px;top:2060px;width:2.5px;height:100px;background:#a8a8a0;"></div>
</body></html>
